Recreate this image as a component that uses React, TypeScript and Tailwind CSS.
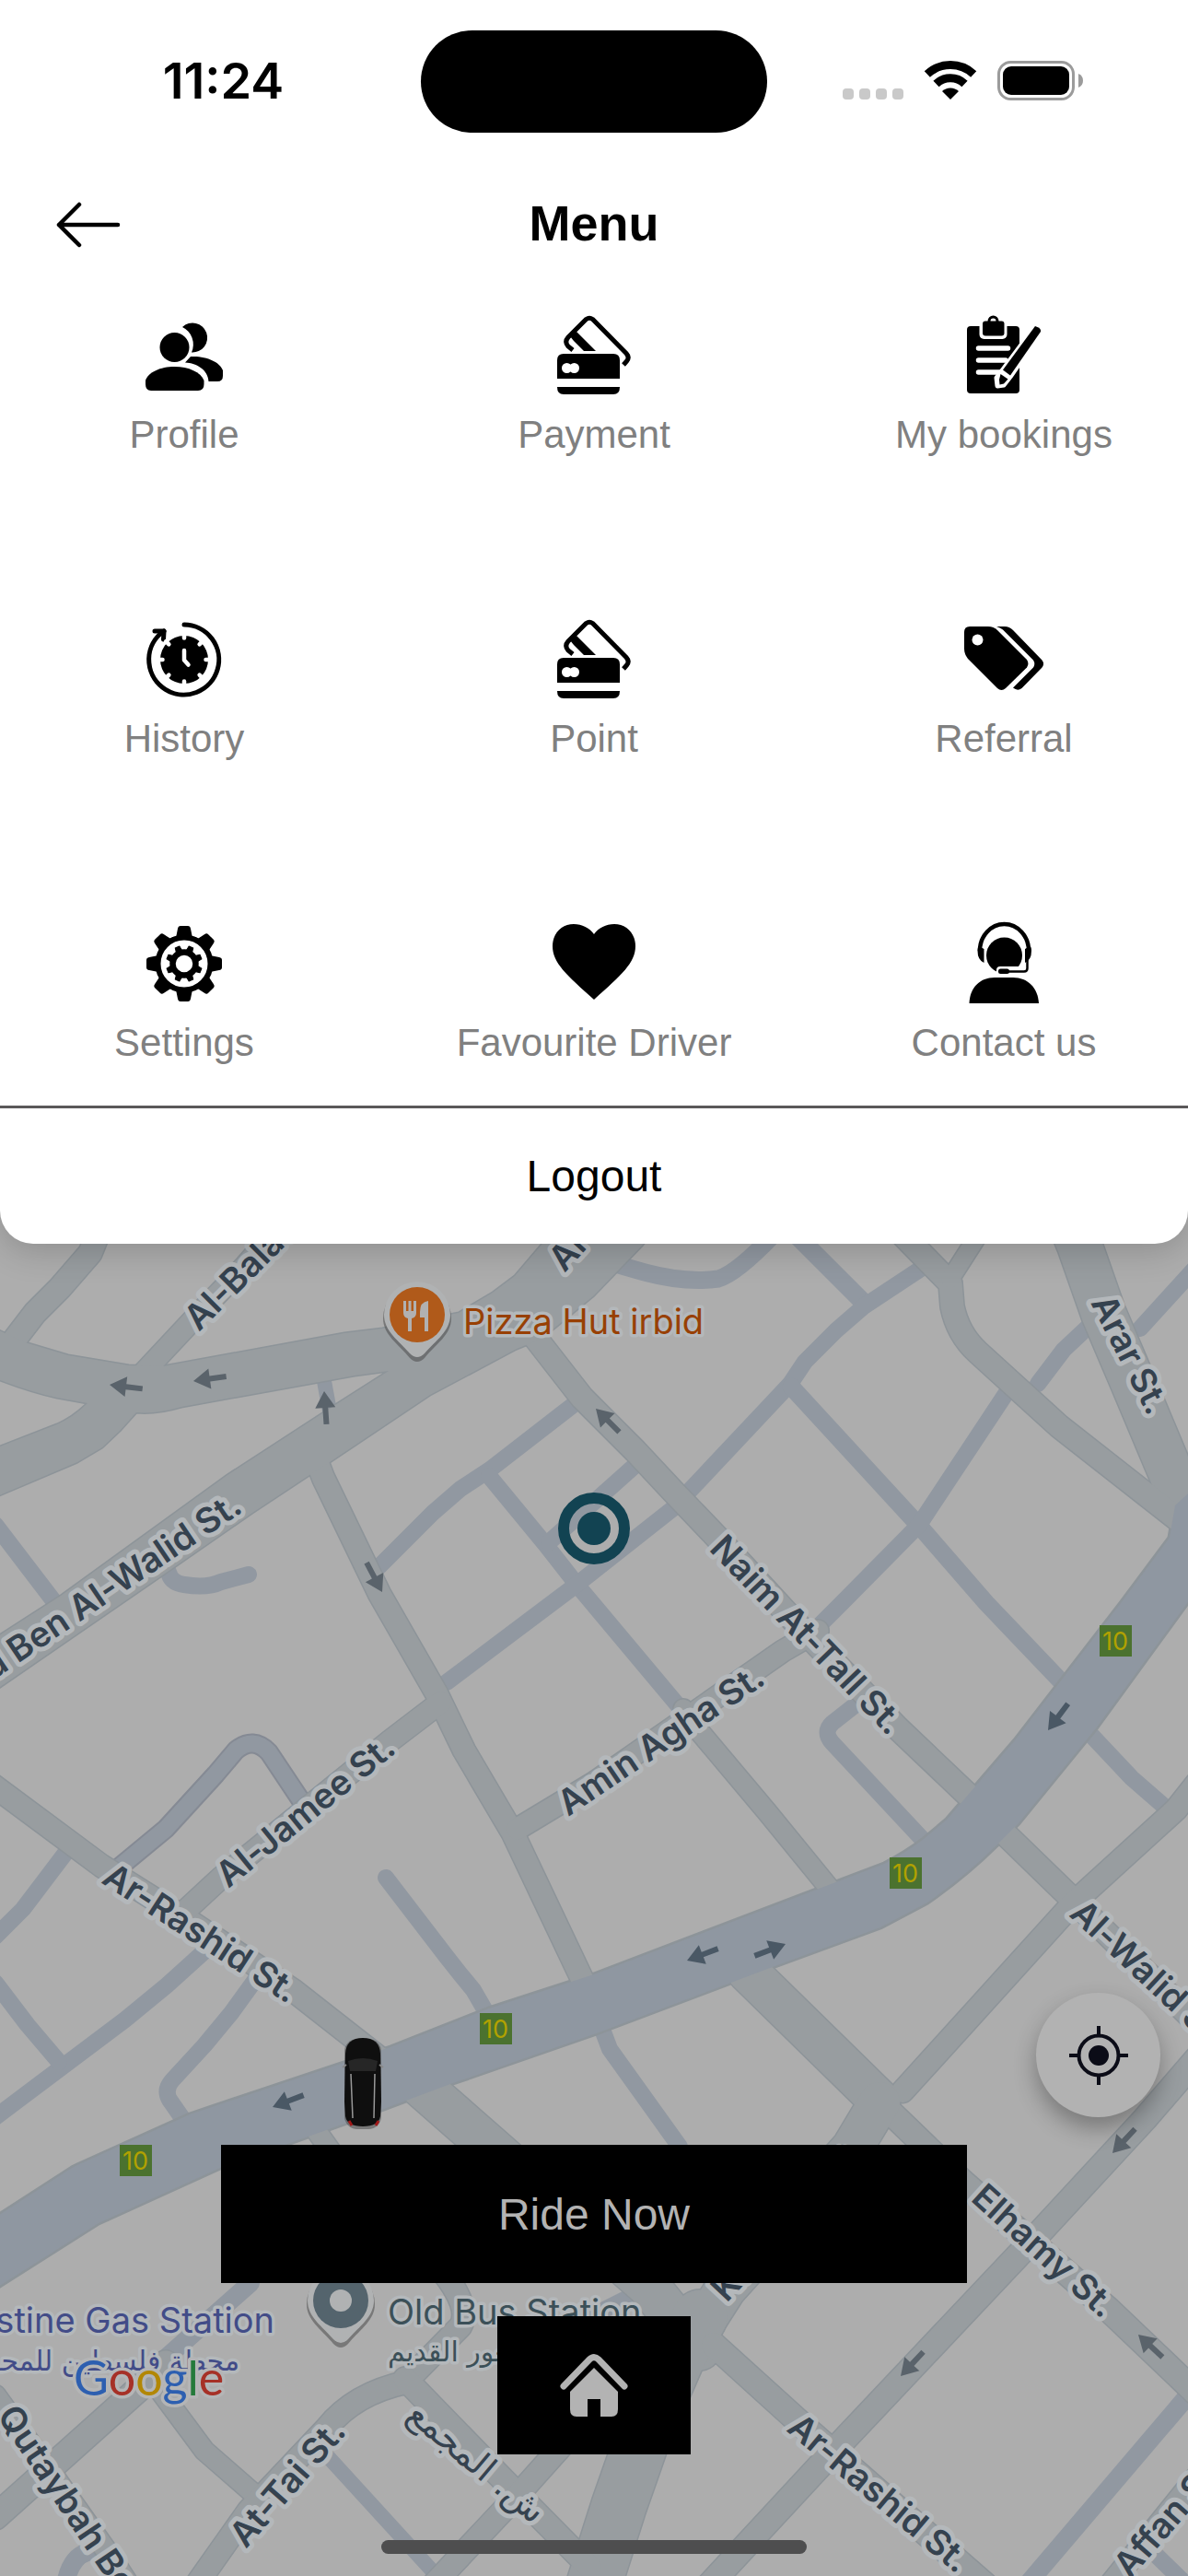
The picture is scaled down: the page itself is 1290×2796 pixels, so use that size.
import type { ReactNode } from 'react'

const INTER = 'Inter, "Liberation Sans", sans-serif'

type Road = { d: string; w: number }

// narrow residential streets, no outline
const lanes: Road[] = [
  { d: 'M350 1488L358 1532', w: 16 },
  { d: 'M412 1700L470 1642L500 1616L532 1595L625 1523', w: 18 },
  { d: 'M531 1602L592 1676L628 1722L742 1858', w: 18 },
  { d: 'M485 1826L626 1720L735 1634', w: 18 },
  { d: 'M596 1674L688 1592', w: 18 },
  { d: 'M665 1371L700 1381Q745 1393 780 1388Q800 1382 840 1340', w: 19 },
  { d: 'M862 1338L938 1414', w: 20 },
  { d: 'M1000 1377L938 1418L908 1444L874 1478L858 1502L746 1621', w: 18 },
  { d: 'M859 1505L998 1656L1071 1740L1155 1828', w: 19 },
  { d: 'M1187 1435L1155 1465L1127 1502', w: 18 },
  { d: 'M1094 1510L998 1655L914 1740L882 1772', w: 18 },
  { d: 'M1300 1374L1238 1442', w: 18 },
  { d: 'M932 1848L904 1870Q893 1880 904 1892L1005 2000', w: 18 },
  { d: 'M1180 1878L1229 1930L1268 1964', w: 18 },
  { d: 'M653 2200L662 2224L738 2330', w: 18 },
  { d: 'M72 2010L25 2072L-5 2102', w: 18 },
  { d: 'M222 2118L181 2155L136 2192L-5 2298', w: 18 },
  { d: 'M-5 2152L30 2198L64 2238', w: 18 },
  { d: 'M280 2145L251 2185L222 2220L187 2258Q178 2268 184 2279L200 2302', w: 18 },
  { d: 'M419 2038L485 2124L500 2143L514 2160L529 2186', w: 18 },
  { d: 'M183 1706Q185 1718 200 1720Q225 1724 240 1717L270 1709', w: 18 },
  { d: 'M-5 1655L60 1740', w: 18 },
  { d: 'M272 2478L177 2562', w: 20 },
  { d: 'M352 2662L480 2802', w: 16 },
  { d: 'M95 2770Q78 2775 72 2800', w: 20 },
  { d: 'M1290 2600L1118 2802', w: 20 },
  { d: 'M1252 2770L1295 2812', w: 18 },
  { d: 'M640 2515L690 2490', w: 18 },
]

// outlined streets
const streets: Road[] = [
  { d: 'M110 1330L98 1360L65 1398L38 1425L15 1455L0 1480', w: 28 },
  { d: 'M150 1496L208 1434L265 1375L300 1335', w: 25 },
  { d: 'M340 1575L351 1604L412 1730L474 1838L504 1900L557 1990L632 2148L640 2170', w: 27 },
  { d: 'M572 1440L632 1517L690 1575L733 1621L777 1667L860 1757L975 1876L1055 1952L1095 1994L1163 2060L1300 2196', w: 28 },
  { d: 'M1155 1310L1172 1351L1198 1425L1230 1500L1272 1600L1290 1640', w: 51 },
  { d: 'M975 1335L1032 1393L1034 1418Q1040 1448 1062 1468L1150 1548L1280 1650', w: 28 },
  { d: 'M1064 1338L1032 1388', w: 22 },
  { d: 'M888 1770L850 1792L645 1935L562 1985', w: 26 },
  { d: 'M742 1855L760 1880L834 1968L905 2055', w: 24 },
  { d: 'M1300 1935L1277 1964L1165 2066L980 2270', w: 27 },
  { d: 'M812 2140L955 2280', w: 47 },
  { d: 'M960 2286L1045 2368L1204 2507L1310 2608', w: 29 },
  { d: 'M955 2282L925 2332L788 2484L765 2520', w: 47 },
  { d: 'M458 2265L530 2328L703 2480L760 2550', w: 48 },
  { d: 'M338 2305L370 2350', w: 24 },
  { d: 'M760 2515L735 2560L700 2640L672 2720L645 2805', w: 62 },
  { d: 'M775 2545L880 2640L1070 2806', w: 29 },
  { d: 'M1300 2234L1243 2300L1132 2420L910 2655L770 2806', w: 29 },
  { d: 'M1205 2806L1300 2688', w: 26 },
  { d: 'M-10 1936L110 2025L210 2088L318 2160L415 2236', w: 27 },
  { d: 'M200 2075L240 2038L423 1890L478 1848', w: 26 },
  { d: 'M-5 2732L156 2588L180 2565', w: 30 },
  { d: 'M170 2590L222 2660L285 2715', w: 24 },
  { d: 'M210 2810L270 2725L355 2635Q385 2598 440 2586L500 2525Q512 2505 480 2465', w: 27 },
  { d: 'M440 2582L545 2690L640 2786', w: 28 },
  { d: 'M625 2638L565 2705L470 2806', w: 27 },
  { d: 'M-5 2600L60 2690L120 2775L140 2806', w: 25 },
]

const loopRoad = 'M128 2028L180 1985L234 1926L256 1900Q275 1884 292 1902L332 1962'

const avenue =
  'M-10 1440L27 1457L74 1471L140 1482L177 1483L374 1447L415 1442L498 1425L535 1403L559 1385L588 1351L610 1320L720 1320L698 1351L645 1406L588 1453L561 1464L467 1514L358 1587L336 1601L274 1642L189 1701L-10 1838L-10 1781L66 1732L247 1601L364 1525L422 1488L385 1493L341 1501L197 1527Q170 1535 148 1533L130 1553L111 1571L84 1587L-10 1627L-10 1574L62 1546Q80 1538 95 1523L62 1517Q30 1510 -10 1494Z'

const highway =
  'M1300 1612L1276 1634L1270 1669L1217 1740L1102 1889L1028 1975L1003 1996Q985 2010 960 2023L645 2143L531 2180L424 2222L206 2295L84 2350L78 2353L-10 2410L-10 2487L107 2413L239 2353L374 2305L489 2262L645 2208L836 2136L956 2092L1007 2065Q1050 2035 1083 2002L1106 1979L1190 1876L1300 1725Z'

// [tip x, tip y, heading in degrees, on the highway]
const arrows: [number, number, number, boolean][] = [
  [119, 1503, 187, false],
  [210, 1499, 172, false],
  [352, 1510, 266, false],
  [415, 1728, 62, false],
  [647, 1529, 225, false],
  [1138, 1878, 127, true],
  [746, 2128, 159, true],
  [853, 2110, -21, true],
  [296, 2287, 159, true],
  [1208, 2337, 133, false],
  [1236, 2534, 223, false],
  [978, 2579, 133, false],
]

const shields = [
  [1194, 1764],
  [966, 2016],
  [521, 2185],
  [130, 2328],
]

type Label = { text: string; x: number; y: number; a: number; end?: boolean }

const streetLabels: Label[] = [
  { text: 'Al-Balad St.', x: 216, y: 1446, a: -45 },
  { text: 'Al-Husn St.', x: 613, y: 1382, a: -48 },
  { text: 'Khalid Ben Al-Walid St.', x: 265, y: 1640, a: -34, end: true },
  { text: 'Arar St.', x: 1184, y: 1414, a: 63 },
  { text: 'Naim At-Tall St.', x: 769, y: 1682, a: 46 },
  { text: 'Amin Agha St.', x: 617, y: 1972, a: -34 },
  { text: 'Al-Jamee St.', x: 248, y: 2050, a: -39 },
  { text: 'Ar-Rashid St.', x: 109, y: 2043, a: 33 },
  { text: 'Al-Walid St.', x: 1160, y: 2079, a: 43 },
  { text: 'Elhamy St.', x: 1053, y: 2388, a: 42 },
  { text: 'K. Hasan St.', x: 789, y: 2500, a: -47 },
  { text: 'Ar-Rashid St.', x: 853, y: 2638, a: 40 },
  { text: 'At-Tai St.', x: 267, y: 2767, a: -49 },
  { text: 'Qutaybah Ben', x: -4, y: 2622, a: 56 },
  { text: 'Affan St.', x: 1227, y: 2800, a: -49 },
]

function Pin({ x, y, color, children }: { x: number; y: number; color: string; children: ReactNode }) {
  return (
    <g transform={`translate(${x} ${y})`}>
      <path d="M-37 0A37 37 0 1 1 37 0C37 18 20 28 8 43Q0 51 -8 43C-20 28 -37 18 -37 0Z" fill="#444" opacity="0.5" transform="translate(0 4)" />
      <path d="M-36 0A36 36 0 1 1 36 0C36 18 20 28 8 42Q0 50 -8 42C-20 28 -36 18 -36 0Z" fill="#b0b2b3" />
      <circle r="30" fill={color} />
      {children}
    </g>
  )
}

function CityMap() {
  return (
    <svg
      className="absolute inset-0 h-full w-full"
      viewBox="0 0 1290 2796"
      preserveAspectRatio="xMidYMid slice"
      role="img"
      aria-label="Map"
      fontFamily={INTER}
    >
      <rect width="1290" height="2796" fill="#adadad" />

      {/* Roads */}
      <g fill="none" stroke="#9198a1" strokeLinecap="round" strokeLinejoin="round">
        {lanes.map((r, i) => (
          <path key={i} d={r.d} strokeWidth={r.w} />
        ))}
        <path d={loopRoad} stroke="#858a94" strokeWidth="22" />
        <path d={loopRoad} strokeWidth="18" />
      </g>
      <g fill="none" stroke="#8d9499" strokeLinecap="round" strokeLinejoin="round">
        {streets.map((r, i) => (
          <path key={i} d={r.d} strokeWidth={r.w} />
        ))}
        <path d={avenue} strokeWidth="3" />
        <path d={highway} strokeWidth="5" />
      </g>
      <g fill="none" stroke="#989da0" strokeLinecap="round" strokeLinejoin="round">
        {streets.map((r, i) => (
          <path key={i} d={r.d} strokeWidth={r.w - 3} />
        ))}
      </g>
      <path d={avenue} fill="#989da0" />
      <path d={highway} fill="#8f97a1" />

      {/* One-way arrows */}
      {arrows.map(([x, y, a, main], i) => (
        <path
          key={i}
          transform={`translate(${x} ${y}) rotate(${a})`}
          d="M0 0L-18 -11V-3H-36V3H-18V11Z"
          fill={main ? '#4a5865' : '#5a636b'}
        />
      ))}

      {/* Route shields */}
      {shields.map(([x, y]) => (
        <g key={x}>
          <rect x={x} y={y} width="35" height="34" fill="#4b722f" />
          <text x={x + 17} y={y + 27} textAnchor="middle" fontSize="27" fill="#b1a100">
            10
          </text>
        </g>
      ))}

      {/* Street names */}
      <g fontSize="38" fontWeight="600" fill="#35424f" stroke="#b4b8bb" strokeWidth="10" strokeLinejoin="round" paintOrder="stroke">
        {streetLabels.map((l, i) => (
          <text key={i} transform={`translate(${l.x} ${l.y}) rotate(${l.a})`} textAnchor={l.end ? 'end' : 'start'}>
            {l.text}
          </text>
        ))}
        <text transform="translate(440 2624) rotate(40)" fontSize="38" fontWeight="500" fontFamily='"DejaVu Sans", sans-serif'>
          ش. المجمع
        </text>
      </g>

      {/* Places */}
      <g fontSize="38" stroke="#b4b8bb" strokeWidth="7" strokeLinejoin="round" paintOrder="stroke">
        <text x="503" y="1448" fill="#984004">
          Pizza Hut irbid
        </text>
        <text x="421" y="2523" fill="#3c5058">
          Old Bus Station
        </text>
        <text x="421" y="2563" fontSize="30" fontFamily='"DejaVu Sans", sans-serif' fill="#3c5058">
          مجمع الغور القديم
        </text>
        <text x="298" y="2532" textAnchor="end" fill="#424c88">
          Palestine Gas Station
        </text>
        <text x="260" y="2573" textAnchor="end" fontSize="30" fontFamily='"DejaVu Sans", sans-serif' fill="#424c88">
          محطة فلسطين للمحروقات
        </text>
      </g>
      <Pin x={453} y={1427} color="#b05a1a">
        <path d="M-15 -15v13q0 5 5 6v14h4v-14q5 -1 5 -6v-13h-3v11h-2.500v-11h-3v11h-2.500v-11ZM12 -15q-9 1 -9 12v6h5v15h4Z" fill="#b1b1b1" />
      </Pin>
      <Pin x={370} y={2497} color="#54646d">
        <circle r="12" fill="#b0b2b3" />
      </Pin>

      {/* Google */}
      <text x="80" y="2600" fontSize="52" fontFamily="Lato, sans-serif" stroke="#b4b5b6" strokeWidth="7" strokeLinejoin="round" paintOrder="stroke">
        <tspan fill="#2d5fb0">G</tspan>
        <tspan fill="#a63127">o</tspan>
        <tspan fill="#b28705">o</tspan>
        <tspan fill="#2d5fb0">g</tspan>
        <tspan fill="#257a3b">l</tspan>
        <tspan fill="#a63127">e</tspan>
      </text>

      {/* Pickup point */}
      <circle cx="645" cy="1659" r="33" fill="none" stroke="#124352" strokeWidth="12" />
      <circle cx="645" cy="1659" r="18" fill="#124352" />

      {/* Nearby car */}
      <g transform="translate(394 2261)">
        <rect x="-20" y="-48" width="40" height="98" rx="14" fill="#444" opacity="0.5" />
        <path d="M-19 -32Q-18 -49 0 -49T19 -32L20 20L19 36Q17 47 0 47T-19 36L-20 20Z" fill="#0f0f0f" />
        <path d="M-16 -24Q0 -30 16 -24L14 -13H-14Z" fill="#262626" />
        <path d="M-22 -17L-18 -20M22 -17L18 -20" stroke="#888" strokeWidth="2" />
        <path d="M-13 -10L-11 38M13 -10L12 38" stroke="#999" strokeWidth="1.500" />
        <path d="M-15 41L-12 46M17 41L14 46" stroke="#a01818" strokeWidth="3" />
      </g>
    </svg>
  )
}

function ProfileIcon() {
  return (
    <>
      <path d="M48 19A16 16 0 1 1 58 46.500A21 21 0 0 0 48 19Z" />
      <circle cx="39.500" cy="41" r="16" />
      <path d="M8 81V77C11 68 24 62 39.500 62S68 68 71.500 77V81Q71.500 88 65 88H14Q8 88 8 81Z" />
      <path d="M57 51C74 50 89 57 92 66V72Q92 78 86 78H76.500C76 66 64 58 51 57.500Z" />
    </>
  )
}

function CardsIcon() {
  return (
    <>
      <path d="M27 44L22 40Q17.500 35 22 30L41.500 10.500Q45 8 48.500 10.500L85 47.500Q89 52 85.500 56L82 60" fill="none" stroke="currentColor" strokeWidth="5" />
      <path d="M24 29L31 24L52 45H39L28 34Z" />
      <path d="M10 75V55Q10 48 17 48H71Q78 48 78 55V75ZM10 84H78Q78 92 71 92H17Q10 92 10 84Z" />
      <circle cx="20.500" cy="63.500" r="5.500" fill="#fff" />
      <circle cx="28.500" cy="63.500" r="5.500" fill="#fff" />
    </>
  )
}

function BookingsIcon() {
  return (
    <>
      <rect x="10" y="18" width="57" height="73" rx="4" />
      <rect x="23.500" y="12" width="30" height="20" rx="5" fill="#fff" />
      <rect x="27" y="12.500" width="23.500" height="16" rx="3" />
      <circle cx="38.500" cy="12.500" r="4.500" fill="none" stroke="currentColor" strokeWidth="3" />
      <path d="M22.500 42H54.500M22.500 55H52M22.500 68H46" stroke="#fff" strokeWidth="5.500" strokeLinecap="round" />
      <path d="M84 18L91 24L57 73L50 82L43 83L42 74L49 65Z" fill="#fff" stroke="#fff" strokeWidth="5" strokeLinejoin="round" />
      <path d="M84 18Q91 20 90 24L57 71.500L49 65.500Z" strokeLinejoin="round" />
      <path d="M46.500 70L54.500 75.500L50 80.500L45.500 81.500L45 76Z" />
    </>
  )
}

function HistoryIcon() {
  return (
    <>
      <path d="M50 12A38 38 0 1 1 24 22L28 19" fill="none" stroke="currentColor" strokeWidth="5" strokeLinecap="round" />
      <path d="M18 19H28L27.500 28" fill="none" stroke="currentColor" strokeWidth="5" strokeLinecap="round" strokeLinejoin="round" />
      <circle cx="50" cy="50" r="26" />
      {[0, 45, 90, 135, 180, 225, 270, 315].map((a) => (
        <path key={a} transform={`rotate(${a} 50 50)`} d="M50 22V26.500" stroke="#fff" strokeWidth="4.500" strokeLinecap="round" />
      ))}
      <path d="M50 40V50.500L54.500 55.500" fill="none" stroke="#fff" strokeWidth="4.500" strokeLinecap="round" strokeLinejoin="round" />
    </>
  )
}

function TagsIcon() {
  return (
    <>
      <path d="M7 20Q7 14 13 14H33Q39 14 43 18L75 50Q78 54.500 75 58.500L52 81Q47.500 85 43 81L11 49Q7 44 7 38Z" />
      <circle cx="21.500" cy="28.500" r="6" fill="#fff" />
      <path d="M42 14H51Q56 14 60 18L91.500 50.500Q94.500 54.500 91.500 58.500L69.500 81Q65 84.500 60 80.500L82 58.500Q84.500 54.500 82 50.500L49 17.500Q46 15 42 14Z" />
    </>
  )
}

function SettingsIcon() {
  return (
    <>
      <circle cx="50" cy="50" r="28.500" fill="none" stroke="currentColor" strokeWidth="6" />
      <circle cx="50" cy="50" r="12.500" fill="none" stroke="currentColor" strokeWidth="6.500" />
      {[0, 45, 90, 135, 180, 225, 270, 315].map((a) => (
        <g key={a} transform={`rotate(${a} 50 50)`}>
          <path d="M41 22L43 12Q43.500 9 46 9H54Q56.500 9 57 12L59 22Z" />
          <path transform="rotate(22.500 50 50)" d="M46.500 37L47.500 30.500H52.500L53.500 37Z" strokeWidth="1" stroke="currentColor" strokeLinejoin="round" />
        </g>
      ))}
    </>
  )
}

function HeartIcon() {
  return <path d="M50 89C20 62 5 49 5 31C5 17 15 7 28 7C37 7 45 11 50 18C55 11 63 7 72 7C85 7 95 17 95 31C95 49 80 62 50 89Z" />
}

function SupportIcon() {
  return (
    <>
      <path d="M24 36A26.500 29 0 0 1 77 36" fill="none" stroke="currentColor" strokeWidth="4.500" />
      <path d="M21.500 36Q21.500 32 23 31L28.500 34V49Q21.500 46 21.500 36ZM80 36Q80 32 78.500 31L73 34V49Q80 46 80 36Z" />
      <circle cx="50.500" cy="41" r="19.500" />
      <path d="M42 62V57Q42 53 46 53H68V62Z" fill="#fff" />
      <path d="M75.500 46V55Q75.500 58.500 72 58.500H52" fill="none" stroke="currentColor" strokeWidth="2.500" />
      <rect x="44" y="55.500" width="12" height="5.500" rx="2.500" />
      <path d="M12.500 93C13 76 24 65 40 65H60C76 65 87 76 88 93Z" />
    </>
  )
}

const items = [
  { label: 'Profile', icon: <ProfileIcon /> },
  { label: 'Payment', icon: <CardsIcon /> },
  { label: 'My bookings', icon: <BookingsIcon /> },
  { label: 'History', icon: <HistoryIcon /> },
  { label: 'Point', icon: <CardsIcon /> },
  { label: 'Referral', icon: <TagsIcon /> },
  { label: 'Settings', icon: <SettingsIcon /> },
  { label: 'Favourite Driver', icon: <HeartIcon /> },
  { label: 'Contact us', icon: <SupportIcon /> },
]

function StatusBar() {
  return (
    <div className="grid grid-cols-[1fr_376px_1fr] px-7 pt-[33px]">
      <div className="flex h-[108px] items-center justify-center font-[Inter,sans-serif] text-[54px] font-semibold">11:24</div>
      <div className="h-[111px] rounded-full bg-black"></div>
      <div className="flex h-[108px] items-center justify-center gap-[22px] pr-1">
        <div className="flex gap-[6px] pt-[30px]">
          <span className="size-3 rounded-[4px] bg-[#c9c9c9]"></span>
          <span className="size-3 rounded-[4px] bg-[#c9c9c9]"></span>
          <span className="size-3 rounded-[4px] bg-[#c9c9c9]"></span>
          <span className="size-3 rounded-[4px] bg-[#c9c9c9]"></span>
        </div>
        <svg className="h-[42px] w-[58px]" viewBox="0 0 57 42">
          <path d="M3.300 14.500A37 37 0 0 1 53.700 14.500" fill="none" stroke="#000" strokeWidth="9" />
          <path d="M13 25A22.500 22.500 0 0 1 44 25" fill="none" stroke="#000" strokeWidth="9" />
          <path d="M28.500 42L19.500 33A13 13 0 0 1 37.500 33Z" />
        </svg>
        <svg className="h-[43px] w-[94px]" viewBox="0 0 94 43">
          <rect x="1.500" y="1.500" width="81" height="40" rx="13" fill="none" stroke="#9b9b9b" strokeWidth="3" />
          <rect x="6" y="6" width="72" height="31" rx="9" />
          <path d="M88 14Q93 16 93 21.500T88 29Z" fill="#9b9b9b" />
        </svg>
      </div>
    </div>
  )
}

export default function App() {
  return (
    <div className="relative flex min-h-screen flex-col overflow-hidden bg-[#adadad] font-['Liberation_Sans',Arial,sans-serif]">
      <CityMap />

      {/* Menu sheet */}
      <section className="relative rounded-b-[36px] bg-white text-black shadow-[0_8px_36px_rgba(0,0,0,0.18)]">
        <StatusBar />
        <header className="mt-[60px] grid h-20 grid-cols-[1fr_auto_1fr] items-center px-[60px]">
          <button type="button" aria-label="Back" className="w-[72px]">
            <svg className="h-[52px] w-[72px]" viewBox="0 0 72 52" fill="none" stroke="#000" strokeWidth="4.500" strokeLinecap="round" strokeLinejoin="round">
              <path d="M68 26H4M26 4L4 26L26 48" />
            </svg>
          </button>
          <h1 className="pb-1 text-[54px] leading-[60px] font-bold">Menu</h1>
        </header>
        <nav className="mt-[52px] grid grid-cols-3 gap-x-[45px] gap-y-[164px]">
          {items.map((item) => (
            <a key={item.label} href="#" className="flex flex-col items-center gap-1.5">
              <svg className="size-[100px]" viewBox="0 0 100 100" fill="currentColor">
                {item.icon}
              </svg>
              <span className="text-[42px] leading-[60px] whitespace-nowrap text-[#808080]">{item.label}</span>
            </a>
          ))}
        </nav>
        <button type="button" className="mt-[38px] block h-[150px] w-full border-t-[3px] border-[#5a5859] text-[48px]">
          Logout
        </button>
      </section>

      {/* Map controls */}
      <main className="relative mt-auto flex flex-col items-center pb-6">
        <button
          type="button"
          aria-label="My location"
          className="mr-[30px] flex size-[135px] items-center justify-center self-end rounded-full bg-[#b2b2b2] shadow-[0_12px_24px_rgba(0,0,0,0.3)]"
        >
          <svg className="size-16" viewBox="0 0 64 64" fill="none" stroke="#0b0c17" strokeWidth="4">
            <circle cx="32" cy="32" r="21.500" />
            <circle cx="32" cy="32" r="11" fill="#0b0c17" stroke="none" />
            <path d="M32 0V10M32 54V64M0 32H10M54 32H64" />
          </svg>
        </button>
        <button type="button" className="mt-[30px] h-[150px] w-[810px] bg-black pt-0.5 text-[48px] text-[#b3b3b3]">
          Ride Now
        </button>
        <button type="button" aria-label="Home" className="mt-9 flex h-[150px] w-[210px] items-center justify-center bg-black">
          <svg className="h-[70px] w-[76px]" viewBox="0 0 76 70">
            <path d="M5 36L33 7Q38 2 43 7L71 36" fill="none" stroke="#b3b3b3" strokeWidth="7" strokeLinecap="round" strokeLinejoin="round" />
            <path d="M38 16L64 42V61Q64 69 57 69H45V50H31V69H19Q12 69 12 61V42Z" fill="#b3b3b3" />
          </svg>
        </button>
        <div className="mt-[93px] h-[15px] w-[462px] rounded-full bg-[#4e4e4f]"></div>
      </main>
    </div>
  )
}
